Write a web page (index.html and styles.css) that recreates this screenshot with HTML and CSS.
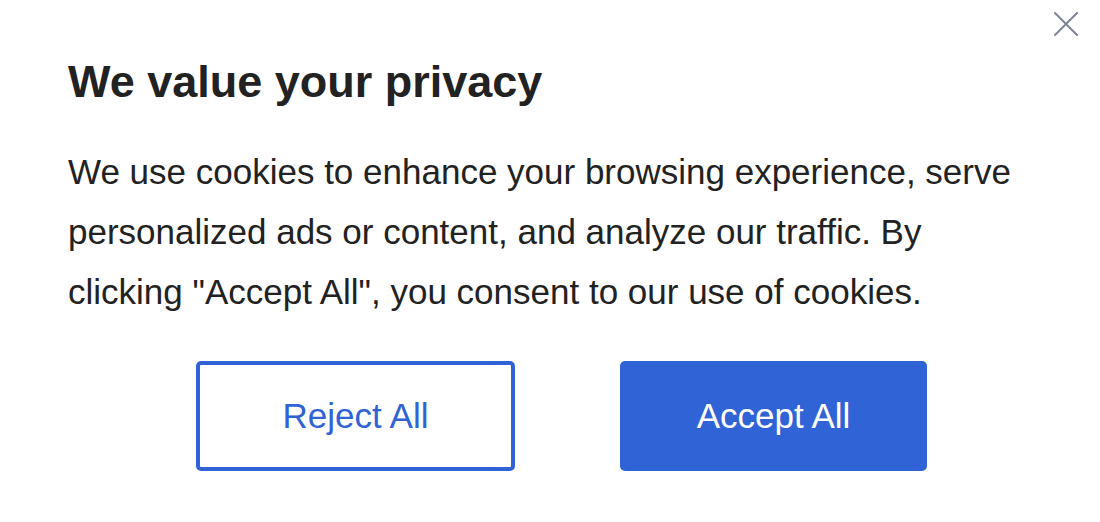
FILE: index.html
```html
<!DOCTYPE html>
<html>
<head>
<meta charset="utf-8">
<link rel="stylesheet" href="styles.css">
</head>
<body>
<div class="dialog">
  <button class="close" aria-label="Close">
    <svg width="24" height="24" viewBox="0 0 24 24"><path d="M1 1L23 23M23 1L1 23" stroke="#7c8597" stroke-width="2" stroke-linecap="round" fill="none"/></svg>
  </button>
  <h1 class="title">We value your privacy</h1>
  <p class="text">We use cookies to enhance your browsing experience, serve personalized ads or content, and analyze our traffic. By clicking "Accept All", you consent to our use of cookies.</p>
  <div class="actions">
    <button class="btn btn-outline">Reject All</button>
    <button class="btn btn-solid">Accept All</button>
  </div>
</div>
</body>
</html>
```

FILE: styles.css
```css
html, body {
  margin: 0;
  padding: 0;
  background: #ffffff;
}
body {
  font-family: "Liberation Sans", Arial, sans-serif;
  color: #222222;
}
.dialog {
  position: relative;
  width: 1100px;
  height: 522px;
  box-sizing: border-box;
  padding: 56px 68px 0 68px;
}
.close {
  position: absolute;
  top: 12px;
  right: 22px;
  background: none;
  border: none;
  padding: 0;
  width: 24px;
  height: 24px;
  cursor: pointer;
}
.close svg { display: block; }
.title {
  margin: 0;
  font-size: 45px;
  line-height: 52px;
  font-weight: bold;
}
.text {
  margin: 34px 0 0 0;
  font-size: 35px;
  line-height: 60px;
  max-width: 964px;
}
.actions {
  display: flex;
  gap: 105px;
  margin-top: 39px;
  padding-left: 128px;
}
.btn {
  font-family: "Liberation Sans", Arial, sans-serif;
  font-size: 35px;
  height: 110px;
  border-radius: 5px;
  box-sizing: border-box;
  cursor: pointer;
}
.btn-outline {
  width: 319px;
  background: #ffffff;
  color: #3063d6;
  border: 4px solid #3063d6;
}
.btn-solid {
  width: 307px;
  background: #3063d6;
  color: #ffffff;
  border: none;
}
```
